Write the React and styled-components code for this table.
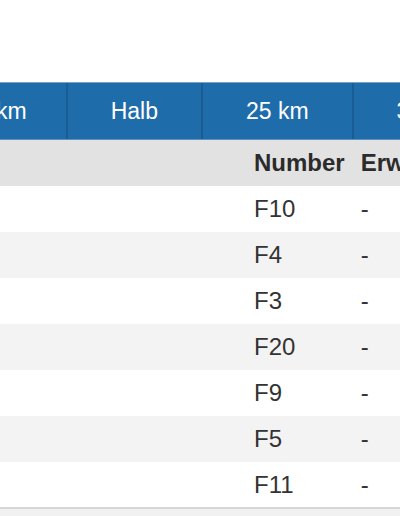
import React, { useEffect, useRef } from 'react'
import styled, { createGlobalStyle } from 'styled-components'

const GlobalStyle = createGlobalStyle`
  html, body {
    margin: 0;
    padding: 0;
    background: #fff;
    font-family: "Liberation Sans", Arial, Helvetica, sans-serif;
    color: #333;
  }
`

const Page = styled.div`
  width: 400px;
  height: 516px;
  overflow: hidden;
  padding-top: 82px;
  box-sizing: border-box;
  background: #fff;
`

const TabScroller = styled.div`
  width: 100%;
  overflow: hidden;
`

const TabBar = styled.div`
  display: flex;
  width: max-content;
  background: #1f6cab;
  border-top: 1px solid #7aa3c9;
  border-bottom: 1px solid #5f8fbd;
`

const Tab = styled.div`
  height: 56px;
  line-height: 56px;
  padding: 0 43px;
  padding-right: ${p => (p.$first ? '39px' : '43px')};
  font-size: 23px;
  color: #fff;
  white-space: nowrap;
  border-right: 2px solid #1a5d95;
`

const Table = styled.table`
  border-collapse: collapse;
  table-layout: fixed;
  width: max-content;
  font-size: 24px;
  border-bottom: 2px solid #d6d6d6;
`

const HeadRow = styled.tr`
  background: #e2e2e2;
`

const Row = styled.tr`
  background: ${p => (p.$striped ? '#f3f3f3' : '#fff')};
`

const Cell = styled.td`
  height: 46px;
  padding: 0 8px;
  box-sizing: border-box;
  white-space: nowrap;
  vertical-align: middle;
  width: ${p => p.$w || 'auto'};
`

const HeadCell = styled(Cell).attrs({ as: 'th' })`
  text-align: left;
  font-weight: bold;
  color: #2b2b2b;
`

const Rest = styled.div`
  height: 20px;
  background: #f1f1f1;
`

const tabs = ['10 km', 'Halb', '25 km', '30 km', 'Marathon']
const rows = ['F10', 'F4', 'F3', 'F20', 'F9', 'F5', 'F11']

export default function App() {
  const scroller = useRef(null)
  const halb = useRef(null)

  useEffect(() => {
    // tab bar is scrolled so that "Halb" starts at x=68
    if (scroller.current && halb.current) {
      scroller.current.scrollLeft = halb.current.offsetLeft - 68
    }
  }, [])

  return (
    <>
      <GlobalStyle />
      <Page>
        <TabScroller ref={scroller}>
          <TabBar>
            {tabs.map((t, i) => (
              <Tab key={t} $first={i === 0} ref={t === 'Halb' ? halb : null}>{t}</Tab>
            ))}
          </TabBar>
        </TabScroller>
        <Table>
          <thead>
            <HeadRow>
              <HeadCell $w="246px"></HeadCell>
              <HeadCell>Number</HeadCell>
              <HeadCell>Erwachsene</HeadCell>
            </HeadRow>
          </thead>
          <tbody>
            {rows.map((r, i) => (
              <Row key={r} $striped={i % 2 === 1}>
                <Cell></Cell>
                <Cell>{r}</Cell>
                <Cell>-</Cell>
              </Row>
            ))}
          </tbody>
        </Table>
        <Rest />
      </Page>
    </>
  )
}
